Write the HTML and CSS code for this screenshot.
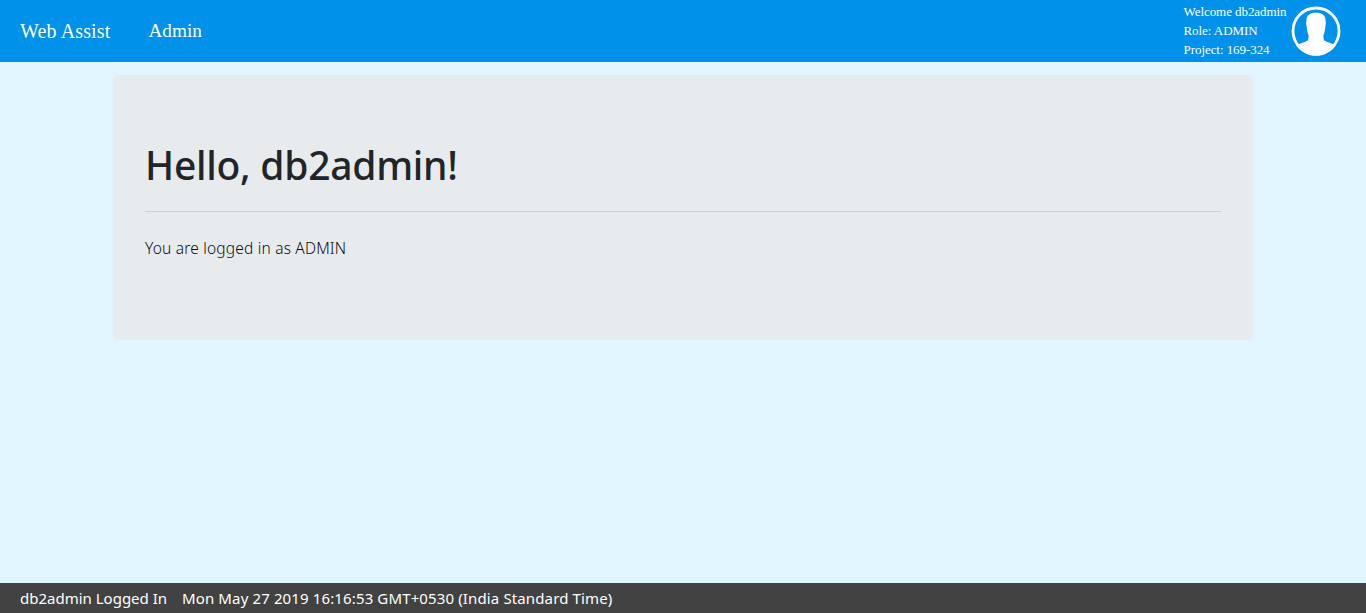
FILE: index.html
```html
<!DOCTYPE html>
<html lang="en">
<head>
<meta charset="utf-8">
<title>Web Assist</title>
<link rel="stylesheet" href="styles.css">
</head>
<body>
<header class="navbar">
  <nav class="nav">
    <a class="brand">Web Assist</a>
    <a class="nav-link">Admin</a>
  </nav>
  <div class="user">
    <div class="user-info">
      <div>Welcome db2admin</div>
      <div>Role: ADMIN</div>
      <div>Project: 169-324</div>
    </div>
    <svg class="avatar" viewBox="0 0 50 50" aria-hidden="true">
      <circle cx="25" cy="25" r="23" fill="none" stroke="#fff" stroke-width="2.8"/>
      <path fill="#fff" d="M25 6.7C18.6 6.7 15.2 9.4 15.4 15.2C15 16 15.1 18 15.6 20C15.8 24 16.4 26.6 17.5 29C17.6 31.8 17.4 33.6 16.6 34.6C14 36.4 9.4 37.2 5.2 39.4A24 24 0 0 0 44.8 39.4C40.6 37.2 36 36.4 33.4 34.6C32.6 33.6 32.4 31.8 32.5 29C33.6 26.6 34.2 24 34.4 20C34.9 18 35 16 34.6 15.2C34.8 9.4 31.4 6.7 25 6.7Z"/>
    </svg>
  </div>
</header>
<main class="jumbotron">
  <h1 class="title">Hello, db2admin!</h1>
  <hr class="rule">
  <p class="lead">You are logged in as ADMIN</p>
</main>
<footer class="footer">
  <span class="status">db2admin Logged In</span>
  <span class="time">Mon May 27 2019 16:16:53 GMT+0530 (India Standard Time)</span>
</footer>
</body>
</html>
```
FILE: styles.css
```css
* { box-sizing: border-box; }
body {
  margin: 0;
  height: 100vh;
  display: flex;
  flex-direction: column;
  background: #e1f5fe;
  font-family: "Segoe UI", "Noto Sans", sans-serif;
  color: #212529;
  overflow: hidden;
}
.navbar {
  height: 62px;
  flex: none;
  display: flex;
  justify-content: space-between;
  background: #0091ea;
  color: #fff;
  font-family: "Times New Roman", "Liberation Serif", serif;
}
.nav { display: flex; padding-left: 20px; }
.brand { width: 128.5px; font-size: 20px; line-height: 63px; letter-spacing: 0.15px; }
.nav-link { font-size: 19.2px; line-height: 62px; }
.user { display: flex; padding-right: 25px; }
.user-info {
  width: 107.5px;
  padding-top: 2px;
  font-size: 13px;
  line-height: 19px;
  letter-spacing: -0.06px;
  white-space: nowrap;
}
.avatar { width: 50px; height: 50px; margin-top: 6px; }
.jumbotron {
  width: 1140px;
  height: 265px;
  flex: none;
  margin: 13px auto 0;
  padding: 64px 32px;
  background: #e8ebed;
  border-radius: 5px;
}
.title {
  margin: 0 0 24px;
  height: 48px;
  font-size: 39px;
  font-weight: 500;
  line-height: 52px;
  letter-spacing: -0.27px;
  white-space: nowrap;
}
.rule { margin: 0 0 24px; border: 0; border-top: 1px solid #cdd1d4; }
.lead {
  margin: 0;
  color: #0c0f12;
  font-size: 15.5px;
  font-weight: 300;
  line-height: 25px;
  letter-spacing: 0.19px;
}
.footer {
  height: 30px;
  flex: none;
  display: flex;
  margin-top: auto;
  padding-left: 20px;
  background: #424242;
  color: #fff;
  font-size: 15px;
  line-height: 30px;
  white-space: nowrap;
}
.status { width: 162px; }
.time { letter-spacing: 0.13px; }
```
